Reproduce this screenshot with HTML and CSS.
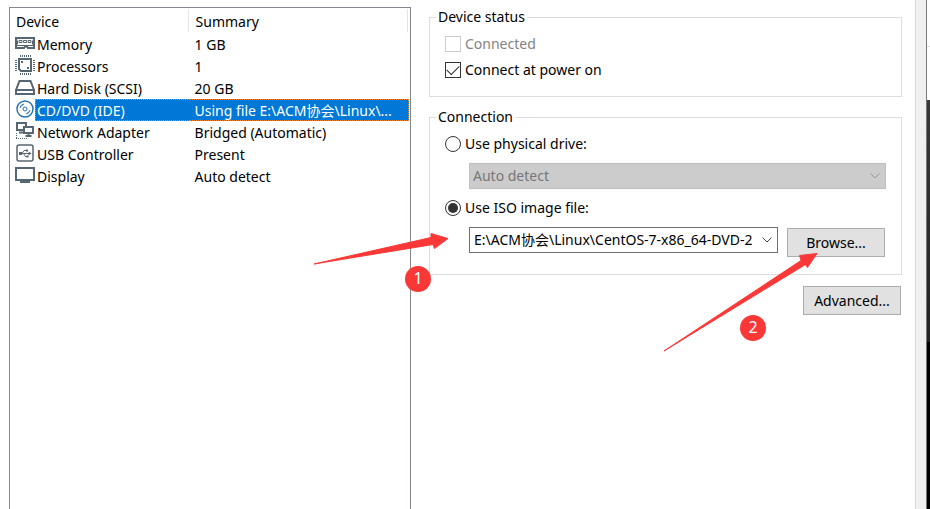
FILE: index.html
```
<!DOCTYPE html>
<html lang="en">
<head>
    <meta charset="UTF-8">
    <meta name="viewport" content="width=device-width, initial-scale=1.0">
    <title>Virtual Machine Settings</title>
    <link rel="stylesheet" href="styles.css">
</head>
<body>
    <main class="dialog">
        <div class="devices">
            <table class="device-table">
                <thead>
                    <tr><th class="col-device">Device</th><th>Summary</th></tr>
                </thead>
                <tbody>
                    <tr>
                        <td><div class="device"><svg class="icon" viewBox="0 0 20 20"><path d="M1 5h18v3.500h-1v2h1v4.500h-6l-1 -1.500h-2l-1 1.500H1v-4.500h1v-2H1z"/><path class="thin" d="M4 7.500h3v2H4zM8.500 7.500h3v2h-3zM13 7.500h3v2h-3zM2 12.500h16"/></svg><span class="name">Memory</span></div></td>
                        <td><span class="value">1 GB</span></td>
                    </tr>
                    <tr>
                        <td><div class="device"><svg class="icon" viewBox="0 0 20 20"><path d="M4 4h12v12H6l-2 -2z"/><path class="pins" d="M5 1h11M5 19h11M1 5v11M19 5v11"/><path class="fill" d="M6 6h2v2H6zM12 12h2v2h-2z"/></svg><span class="name">Processors</span></div></td>
                        <td><span class="value">1</span></td>
                    </tr>
                    <tr>
                        <td><div class="device"><svg class="icon" viewBox="0 0 20 20"><path d="M4.500 4h11L19 13v4H1v-4z"/><path d="M1 13h18"/></svg><span class="name">Hard Disk (SCSI)</span></div></td>
                        <td><span class="value">20 GB</span></td>
                    </tr>
                    <tr class="selected">
                        <td><div class="device"><svg class="icon icon-disc" viewBox="0 0 20 20"><circle cx="10" cy="10" r="8"/><circle class="thin" cx="10" cy="10" r="2"/><path class="thin" d="M5 9a5 5 0 0 1 4 -4M15 11a5 5 0 0 1 -4 4M6 7.500l2 -2M14 12.500l-2 2"/></svg><span class="name">CD/DVD (IDE)</span></div></td>
                        <td><span class="value">Using file E:\ACM协会\Linux\...</span></td>
                    </tr>
                    <tr>
                        <td><div class="device"><svg class="icon" viewBox="0 0 20 20"><path d="M2 2h9v7H2zM4 11.500h5"/><path class="screen" d="M9 6h9v6H9z"/><path d="M13.500 12v3M10.500 15h6"/><path class="dots" d="M1 17.500h11M1.500 12v6"/></svg><span class="name">Network Adapter</span></div></td>
                        <td><span class="value">Bridged (Automatic)</span></td>
                    </tr>
                    <tr>
                        <td><div class="device"><svg class="icon" viewBox="0 0 20 20"><rect x="2" y="2" width="16" height="16" rx="2"/><path class="thin" d="M4 10.500h11M7 10.500l2 -3h2M8.500 10.500l2 3h2"/><path class="fill" d="M4 9h3v3H4zM11 6.500h2v2h-2zM11.500 12.500h2v2h-2zM13.500 8.500l3 2 -3 2z"/></svg><span class="name">USB Controller</span></div></td>
                        <td><span class="value">Present</span></td>
                    </tr>
                    <tr>
                        <td><div class="device"><svg class="icon" viewBox="0 0 20 20"><path d="M1 3h18v12H1zM5 17h10"/></svg><span class="name">Display</span></div></td>
                        <td><span class="value">Auto detect</span></td>
                    </tr>
                </tbody>
            </table>
        </div>

        <form class="settings">
            <fieldset class="group status">
                <legend>Device status</legend>
                <label class="option disabled"><input type="checkbox" disabled>Connected</label>
                <label class="option"><input type="checkbox" checked>Connect at power on</label>
            </fieldset>

            <fieldset class="group connection">
                <legend>Connection</legend>
                <label class="option"><input type="radio" name="source">Use physical drive:</label>
                <div class="combo disabled">
                    <select aria-label="Physical drive" disabled><option>Auto detect</option></select>
                    <svg class="arrow" viewBox="0 0 10 6"><path d="M.5 .5l4.500 4.500 4.500 -4.500"/></svg>
                </div>
                <label class="option"><input type="radio" name="source" checked>Use ISO image file:</label>
                <div class="file-row">
                    <div class="combo">
                        <select aria-label="ISO image file"><option>E:\ACM协会\Linux\CentOS-7-x86_64-DVD-2009.iso</option></select>
                        <svg class="arrow" viewBox="0 0 10 6"><path d="M.5 .5l4.500 4.500 4.500 -4.500"/></svg>
                    </div>
                    <button type="button">Browse...</button>
                </div>
            </fieldset>

            <button type="button" class="advanced">Advanced...</button>
        </form>

        <!-- numbered callouts over the dialog -->
        <svg class="pointers" width="930" height="509" viewBox="0 0 930 509">
            <path d="M314 264L431 237.500v-4l17 5 -13.500 10 -1.500 -4z"/>
            <path d="M664 351L801 260.500l-1.500 -5 17.500 -2 -9.500 14 -2 -3z"/>
        </svg>
        <span class="step step-one">1</span>
        <span class="step step-two">2</span>
    </main>
    <div class="edge"></div>
    <div class="desktop"><div class="window-behind"></div><div class="shade"></div></div>
</body>
</html>
```

FILE: styles.css
```
* {
    box-sizing: border-box;
}
body {
    margin: 0;
    display: flex;
    min-height: 100vh;
    background: #fff;
    color: #000;
    font-family: "Noto Sans", "Noto Sans CJK SC", sans-serif;
    font-size: 14px;
    line-height: 22px;
}
.dialog {
    position: relative;
    flex: 1;
    min-width: 0;
    display: grid;
    grid-template-columns: minmax(0, 402fr) minmax(0, 473fr);
    column-gap: 18px;
    padding: 7px 13px 0 9px;
}

/* device list */
.devices {
    border: 1px solid #828790;
    border-bottom: none;
    padding-right: 1px;
}
.device-table {
    width: 100%;
    table-layout: fixed;
    border-collapse: collapse;
}
.device-table th {
    height: 25px;
    padding: 2px 0 0 6px;
    text-align: left;
    font-weight: normal;
    background: linear-gradient(#e5e5e5, #e5e5e5) right 1px top 1px / 1px 23px no-repeat;
}
.col-device {
    width: 45%;
}
.device-table td {
    height: 22px;
    padding: 0;
}
.device {
    display: flex;
    padding-left: 5px;
}
.icon {
    flex: none;
    width: 20px;
    height: 20px;
    fill: none;
    stroke: #566673;
    stroke-width: 2;
}
.icon .thin {
    stroke-width: 1;
}
.icon .fill {
    fill: #566673;
    stroke: none;
}
.icon .screen {
    fill: #fff;
}
.icon .pins {
    stroke-dasharray: 1 1;
}
.icon .dots {
    stroke-width: 1;
    stroke-dasharray: 1 1;
}
.icon rect {
    stroke-width: 1.5;
}
.icon-disc {
    stroke: #2b74ad;
    stroke-width: 1.5;
}
.name,
.value {
    height: 22px;
    line-height: 24px;
}
.name {
    flex: 1;
    padding-left: 2px;
}
.value {
    display: block;
    padding: 0 10px 0 5px;
    overflow: hidden;
    white-space: nowrap;
}
.selected .name,
.selected .value {
    background: #0078d7;
    color: #fff;
    border: 1px dotted #ff8728;
    line-height: 22px;
}
.selected .name {
    padding-left: 1px;
    border-right: none;
}
.selected .value {
    border-left: none;
}

/* settings */
.settings {
    display: flex;
    flex-direction: column;
}
.group {
    margin: 0;
    min-width: 0;
    border: 1px solid #dcdcdc;
}
.group legend {
    height: 20px;
    margin-left: -9px;
    padding: 0 2px;
    line-height: 20px;
}
.status {
    height: 90px;
    padding: 6px 15px 0 15px;
}
.option {
    display: flex;
    align-items: center;
    gap: 4px;
    height: 22px;
    line-height: 24px;
}
.status .option + .option {
    margin-top: 4px;
}
.option.disabled {
    color: #838383;
}
.option input {
    appearance: none;
    flex: none;
    width: 16px;
    height: 16px;
    margin: 0;
    border: 1px solid #333;
    background: #fff;
}
.option input:disabled {
    border-color: #ccc;
}
.option input[type="checkbox"]:checked::before {
    content: "";
    display: block;
    width: 11px;
    height: 6px;
    margin: 2px 1px;
    border: solid #333;
    border-width: 0 0 1px 1px;
    transform: rotate(-45deg);
}
.option input[type="radio"] {
    border-radius: 50%;
}
.option input[type="radio"]:checked {
    background: #333;
    background-clip: content-box;
    padding: 2px;
}
.connection {
    margin-top: 10px;
    padding: 6px 15px 17px 15px;
}
.combo {
    position: relative;
    flex: 1;
    min-width: 0;
}
.connection > .combo {
    margin: 8px 0 8px 24px;
}
.combo select {
    appearance: none;
    display: block;
    width: 100%;
    height: 26px;
    padding: 0 25px 0 4px;
    border: 1px solid #707070;
    border-radius: 0;
    background: #fff;
    color: #000;
    font: inherit;
    line-height: 22px;
    text-overflow: clip;
}
.combo select:disabled {
    padding-left: 3px;
    border-color: #bfbfbf;
    background: #ccc;
    color: #777;
    opacity: 1;
}
.arrow {
    position: absolute;
    right: 6px;
    top: 10px;
    width: 10px;
    height: 6px;
    fill: none;
    stroke: #444;
    pointer-events: none;
}
.disabled .arrow {
    stroke: #999;
}
.file-row {
    display: flex;
    align-items: flex-start;
    gap: 9px;
    margin: 8px 0 0 24px;
}
button {
    width: 98px;
    height: 29px;
    padding: 0;
    border: 1px solid #adadad;
    background: #e1e1e1;
    color: #000;
    font: inherit;
}
.file-row button {
    margin: 1px 1px 0 0;
}
.advanced {
    align-self: flex-end;
    margin: 11px 1px 0 0;
}

/* callouts */
.pointers {
    position: absolute;
    left: 0;
    top: 0;
    fill: #fb3838;
    stroke: #fb3838;
    pointer-events: none;
}
.step {
    position: absolute;
    width: 26px;
    height: 26px;
    border-radius: 50%;
    background: #fb3838;
    color: #fff;
    font-size: 16px;
    line-height: 25px;
    text-align: center;
}
.step-one {
    left: 405px;
    top: 266px;
}
.step-two {
    left: 740px;
    top: 315px;
}

/* right side of the window */
.edge {
    width: 12px;
    border: solid #d9d9d9;
    border-width: 0 1px;
    border-right-color: #777;
    background: #f0f0f0;
}
.desktop {
    width: 3px;
    background: #000;
}
.window-behind {
    height: 100px;
    background: linear-gradient(#ddd, #ddd) 0 46px / 100% 1px no-repeat, #fff;
}
.shade {
    height: 242px;
    background: linear-gradient(#383838, #222);
}
```
